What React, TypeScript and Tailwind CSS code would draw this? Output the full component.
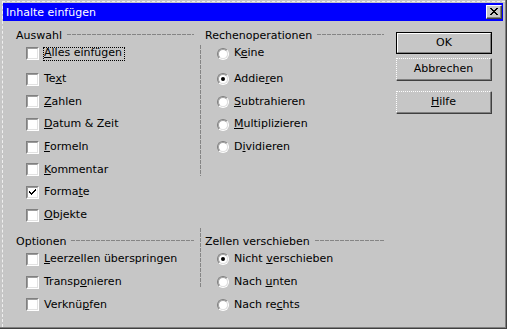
import React from "react";

const LINE_H = "h-[1px] bg-[repeating-linear-gradient(90deg,#858585_0_4px,#c6c6c6_4px_5px)]";
const LINE_V = "w-[1px] bg-[repeating-linear-gradient(180deg,#858585_0_4px,#c6c6c6_4px_5px)]";

function Txt({ text, u }: { text: string; u: number }) {
  if (u < 0) return <span>{text}</span>;
  return (
    <span className="whitespace-pre">
      {text.slice(0, u)}
      <span className="underline decoration-1">{text[u]}</span>
      {text.slice(u + 1)}
    </span>
  );
}

function CheckBox({ checked }: { checked?: boolean }) {
  return (
    <div className="w-[13px] h-[13px] shrink-0 border border-t-[#808080] border-l-[#808080] border-r-white border-b-white">
      <div className="w-full h-full border border-t-[#9c9c9c] border-l-[#9c9c9c] border-r-[#e2e2e2] border-b-[#e2e2e2] bg-white flex items-center justify-center">
        {checked && (
          <svg width="7" height="7" viewBox="0 0 7 7" shapeRendering="crispEdges">
            <path d="M0 2h1v1h-1z M0 3h2v1h-2z M1 4h2v1h-2z M2 5h1v1h-1z M2 4h1v1h-1z M3 3h1v1h-1z M3 4h1v1h-1z M4 2h1v1h-1z M4 3h1v1h-1z M5 1h1v1h-1z M5 2h1v1h-1z M6 0h1v1h-1z M6 1h1v1h-1z" fill="#000" />
          </svg>
        )}
      </div>
    </div>
  );
}

function Radio({ checked }: { checked?: boolean }) {
  return (
    <div className="w-[12px] h-[12px] shrink-0 rounded-full border border-t-[#808080] border-l-[#808080] border-r-white border-b-white">
      <div className="w-full h-full rounded-full border border-t-[#a0a0a0] border-l-[#a0a0a0] border-r-[#e0e0e0] border-b-[#e0e0e0] bg-white flex items-center justify-center">
        {checked && <div className="w-[4px] h-[4px] rounded-full bg-black" />}
      </div>
    </div>
  );
}

function Row({
  kind,
  text,
  u,
  checked,
  focus,
  h,
}: {
  kind: "c" | "r";
  text: string;
  u: number;
  checked?: boolean;
  focus?: boolean;
  h: string;
}) {
  return (
    <div className={`flex items-center ${h} ${kind === "c" ? "pl-[10px]" : "pl-[12px]"}`}>
      {kind === "c" ? <CheckBox checked={checked} /> : <Radio checked={checked} />}
      <span
        className={`ml-[4px] inline-flex items-center h-[14px] pr-[2px] border ${
          focus ? "border-black border-dotted" : "border-transparent"
        } whitespace-nowrap`}
      >
        <Txt text={text} u={u} />
      </span>
    </div>
  );
}

function Header({ text }: { text: string }) {
  return (
    <div className="flex items-start h-[13px]">
      <span className="leading-[13px] whitespace-nowrap">{text}</span>
      <div className={`flex-1 ml-[5px] mt-[5px] ${LINE_H}`} />
    </div>
  );
}

function Button({ children, def, cls }: { children: React.ReactNode; def?: boolean; cls: string }) {
  if (def) {
    return (
      <div className={`${cls} border border-black`}>
        <div className="h-full border border-t-white border-l-white border-r-[#808080] border-b-[#808080] flex items-center justify-center">
          {children}
        </div>
      </div>
    );
  }
  return (
    <div
      className={`${cls} border border-t-white border-l-white border-r-[#404040] border-b-[#404040] [border-top-style:dotted] [border-left-style:dotted]`}
    >
      <div className="h-full border-r border-b border-[#808080] flex items-center justify-center">{children}</div>
    </div>
  );
}

export default function App() {
  const leftRows: [string, number, boolean?][] = [
    ["Text", 2],
    ["Zahlen", 0],
    ["Datum & Zeit", 0],
    ["Formeln", 0],
    ["Kommentar", 0],
    ["Formate", 5, true],
    ["Objekte", 0],
  ];
  const rightRows: [string, number, boolean?][] = [
    ["Addieren", 5, true],
    ["Subtrahieren", 0],
    ["Multiplizieren", 0],
    ["Dividieren", 1],
  ];
  return (
    <div className="w-[507px] h-[329px] bg-[#c6c6c6] border-r border-b border-[#404040] text-[11px] text-black [font-family:'DejaVu_Sans',sans-serif] overflow-hidden">
      <div className="h-full border-r border-b border-[#808080] pl-[2px] pt-[1px]">
        <div className="h-full border-l border-t border-dashed border-[#efefef]">
          {/* Title bar */}
          <div className="mt-[1px] w-[500px] h-[18px] bg-[#0000ff] flex items-center">
            <span className="pl-[3px] text-white leading-[13px] mt-[1px]">Inhalte einfügen</span>
            <div className="ml-auto mr-[1px] w-[16px] h-[14px] border border-t-white border-l-white border-r-[#404040] border-b-[#404040]">
              <div className="h-full border-r border-b border-[#808080] bg-[#c6c6c6] flex items-center justify-center">
                <svg width="8" height="7" viewBox="0 0 8 7" shapeRendering="crispEdges">
                  <path
                    d="M0 0h2v1h-2z M1 1h2v1h-2z M2 2h1v1h-1z M5 2h1v1h-1z M3 3h2v1h-2z M2 4h1v1h-1z M5 4h1v1h-1z M1 5h2v1h-2z M5 5h2v1h-2z M0 6h2v1h-2z M6 6h2v1h-2z M6 0h2v1h-2z M5 1h2v1h-2z M3 2h2v1h-2z M3 4h2v1h-2z"
                    fill="#000"
                  />
                </svg>
              </div>
            </div>
          </div>

          {/* Upper section */}
          <div className="mt-[8px] flex h-[199px] pl-[13px]">
            <div className="w-[178px] flex flex-col">
              <Header text="Auswahl" />
              <div className="h-[1px]" />
              <Row kind="c" text="Alles einfügen" u={0} focus h="h-[21px]" />
              <div className="h-[4px]" />
              {leftRows.map(([t, u, c]) => (
                <Row key={t} kind="c" text={t} u={u} checked={c} h="h-[22.67px]" />
              ))}
            </div>
            <div className={`ml-[6px] mt-[16px] h-[131px] ${LINE_V}`} />
            <div className="ml-[4px] w-[179px] flex flex-col">
              <Header text="Rechenoperationen" />
              <div className="h-[1px]" />
              <Row kind="r" text="Keine" u={1} h="h-[21px]" />
              <div className="h-[4px]" />
              {rightRows.map(([t, u, c]) => (
                <Row key={t} kind="r" text={t} u={u} checked={c} h="h-[22.67px]" />
              ))}
            </div>
            <div className="ml-[12px] w-[96px] flex flex-col">
              <Button def cls="mt-[3px] h-[22px]">
                OK
              </Button>
              <Button cls="mt-[4px] h-[23px]">Abbrechen</Button>
              <Button cls="mt-[10px] h-[23px]">
                <Txt text="Hilfe" u={0} />
              </Button>
            </div>
          </div>

          {/* Lower section */}
          <div className="flex pl-[13px]">
            <div className="w-[178px] flex flex-col pt-[7px]">
              <Header text="Optionen" />
              <div className="h-[1px]" />
              <Row kind="c" text="Leerzellen überspringen" u={0} h="h-[20px]" />
              <div className="h-[2px]" />
              <Row kind="c" text="Transponieren" u={6} h="h-[22.67px]" />
              <Row kind="c" text="Verknüpfen" u={6} h="h-[22.67px]" />
            </div>
            <div className={`ml-[6px] h-[60px] ${LINE_V}`} />
            <div className="ml-[4px] w-[179px] flex flex-col pt-[7px]">
              <Header text="Zellen verschieben" />
              <div className="h-[1px]" />
              <Row kind="r" text="Nicht verschieben" u={6} checked h="h-[20px]" />
              <div className="h-[2px]" />
              <Row kind="r" text="Nach unten" u={5} h="h-[22.67px]" />
              <Row kind="r" text="Nach rechts" u={7} h="h-[22.67px]" />
            </div>
          </div>
        </div>
      </div>
    </div>
  );
}
